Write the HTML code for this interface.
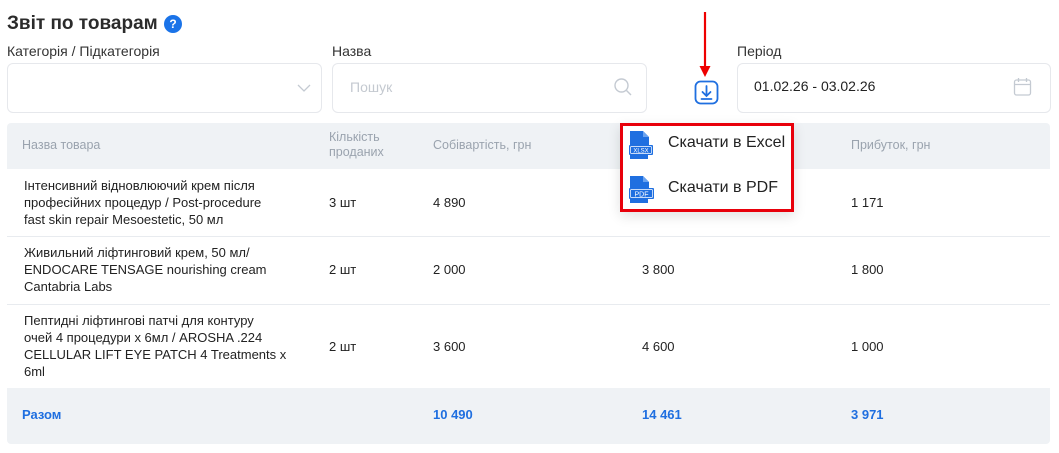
<!DOCTYPE html>
<html><head><meta charset="utf-8"><style>
*{box-sizing:border-box;margin:0;padding:0}
body{width:1059px;height:453px;background:#fff;font-family:"Liberation Sans",Arial,sans-serif;color:#2b2b2b;position:relative;overflow:hidden}
.a{position:absolute}
.lbl{font-size:14px;color:#333}
.inp{border:1px solid #e6e8ec;border-radius:6px;height:50px;background:#fff}
.th{font-size:12.5px;color:#9aa3ae;line-height:15px}
.td{font-size:13px;color:#222;line-height:17px}
.tot{font-size:13px;font-weight:bold;color:#1f6fe0}
.line{position:absolute;left:7px;width:1043px;height:1px;background:#e8ebef}
</style></head><body>
<div class="a" style="left:7px;top:13px;font-size:19px;font-weight:bold;color:#2b2b2b">Звіт по товарам</div>
<div class="a" style="left:164px;top:15px;width:18px;height:18px;border-radius:50%;background:#1a73e8;color:#fff;font-size:12px;font-weight:bold;text-align:center;line-height:18px">?</div>

<div class="a lbl" style="left:7px;top:43px">Категорія / Підкатегорія</div>
<div class="a inp" style="left:7px;top:63px;width:315px"></div>
<svg class="a" style="left:296px;top:82px" width="16" height="12"><path d="M2 3l6 6 6-6" stroke="#c4cad2" stroke-width="1.3" fill="none"/></svg>

<div class="a lbl" style="left:332px;top:43px">Назва</div>
<div class="a inp" style="left:332px;top:63px;width:315px"></div>
<div class="a" style="left:350px;top:79px;font-size:14px;color:#c4c9d0">Пошук</div>
<svg class="a" style="left:613px;top:77px" width="20" height="20"><circle cx="8.5" cy="8.5" r="6.5" stroke="#c4cad2" stroke-width="1.4" fill="none"/><path d="M13.5 13.5l4.5 4.5" stroke="#c4cad2" stroke-width="1.4"/></svg>

<svg class="a" style="left:698px;top:12px" width="14" height="66"><path d="M7 0V58" stroke="#e00" stroke-width="2.2"/><path d="M1.5 54l5.5 11 5.5-11z" fill="#e00"/></svg>
<svg class="a" style="left:694px;top:80px" width="26" height="26"><rect x="1.5" y="1.5" width="22" height="22" rx="5" stroke="#1f6fe0" stroke-width="1.8" fill="none"/><path d="M12.5 6v10M8.5 12l4 4 4-4M7.5 19h10" stroke="#1f6fe0" stroke-width="1.8" fill="none" stroke-linecap="round"/></svg>

<div class="a lbl" style="left:737px;top:43px">Період</div>
<div class="a inp" style="left:737px;top:63px;width:314px"></div>
<div class="a" style="left:754px;top:78px;font-size:14px;color:#222">01.02.26 - 03.02.26</div>
<svg class="a" style="left:1013px;top:77px" width="20" height="20"><rect x="1.5" y="3" width="16" height="15" rx="2" stroke="#c4cad2" stroke-width="1.3" fill="none"/><path d="M1.5 7.5h16M5.5 1v4M13.5 1v4" stroke="#c4cad2" stroke-width="1.3"/></svg>

<div class="a" style="left:7px;top:123px;width:1043px;height:321px;background:#fff;border-radius:4px"></div>
<div class="a" style="left:7px;top:123px;width:1043px;height:46px;background:#eff2f5;border-radius:4px 4px 0 0"></div>
<div class="a th" style="left:22px;top:138px">Назва товара</div>
<div class="a th" style="left:329px;top:130px">Кількість<br>проданих</div>
<div class="a th" style="left:433px;top:138px">Собівартість, грн</div>
<div class="a th" style="left:851px;top:138px">Прибуток, грн</div>

<div class="line" style="top:236px"></div>
<div class="line" style="top:304px"></div>
<div class="a td" style="left:24px;top:177px">Інтенсивний відновлюючий крем після<br>професійних процедур / Post-procedure<br>fast skin repair Mesoestetic, 50 мл</div>
<div class="a td" style="left:329px;top:194px">3 шт</div>
<div class="a td" style="left:433px;top:194px">4 890</div>
<div class="a td" style="left:851px;top:194px">1 171</div>

<div class="a td" style="left:24px;top:244px">Живильний ліфтинговий крем, 50 мл/<br>ENDOCARE TENSAGE nourishing cream<br>Cantabria Labs</div>
<div class="a td" style="left:329px;top:261px">2 шт</div>
<div class="a td" style="left:433px;top:261px">2 000</div>
<div class="a td" style="left:642px;top:261px">3 800</div>
<div class="a td" style="left:851px;top:261px">1 800</div>

<div class="a td" style="left:24px;top:312px">Пептидні ліфтингові патчі для контуру<br>очей 4 процедури х 6мл / AROSHA .224<br>CELLULAR LIFT EYE PATCH 4 Treatments x<br>6ml</div>
<div class="a td" style="left:329px;top:338px">2 шт</div>
<div class="a td" style="left:433px;top:338px">3 600</div>
<div class="a td" style="left:642px;top:338px">4 600</div>
<div class="a td" style="left:851px;top:338px">1 000</div>

<div class="a" style="left:7px;top:388px;width:1043px;height:56px;background:#eff2f5;border-radius:0 0 4px 4px"></div>
<div class="a tot" style="left:22px;top:407px">Разом</div>
<div class="a tot" style="left:433px;top:407px">10 490</div>
<div class="a tot" style="left:642px;top:407px">14 461</div>
<div class="a tot" style="left:851px;top:407px">3 971</div>

<div class="a" style="left:620px;top:123px;width:174px;height:89px;background:#fff;border:3px solid #e8000b;box-shadow:0 4px 12px rgba(0,0,0,.12)"></div>
<svg class="a" style="left:629px;top:131px" width="26" height="29"><path d="M1 0h13l6 6v9H1z" fill="#1f6fe0"/><path d="M14 0v6h6" fill="#6aa3f0"/><rect x="0" y="14" width="24" height="10" rx="1" fill="#1f6fe0"/><rect x="1.5" y="15.5" width="21" height="7" rx="1" fill="none" stroke="#fff" stroke-width=".7"/><text x="12" y="21.5" font-size="6" fill="#fff" text-anchor="middle" font-family="Liberation Sans">XLSX</text><path d="M1 24h18v4H1z" fill="#1f6fe0"/></svg>
<div class="a" style="left:668px;top:134px;font-size:16px;color:#222">Скачати в Excel</div>
<svg class="a" style="left:629px;top:176px" width="26" height="29"><path d="M1 0h13l6 6v9H1z" fill="#1f6fe0"/><path d="M14 0v6h6" fill="#6aa3f0"/><rect x="0" y="12" width="25" height="11" rx="1" fill="#1f6fe0"/><rect x="1.5" y="13.5" width="22" height="8" rx="1" fill="none" stroke="#fff" stroke-width=".7"/><text x="12.5" y="20.5" font-size="7" fill="#fff" text-anchor="middle" font-family="Liberation Sans">PDF</text><path d="M1 23h18v4H1z" fill="#1f6fe0"/></svg>
<div class="a" style="left:668px;top:179px;font-size:16px;color:#222">Скачати в PDF</div>
</body></html>
